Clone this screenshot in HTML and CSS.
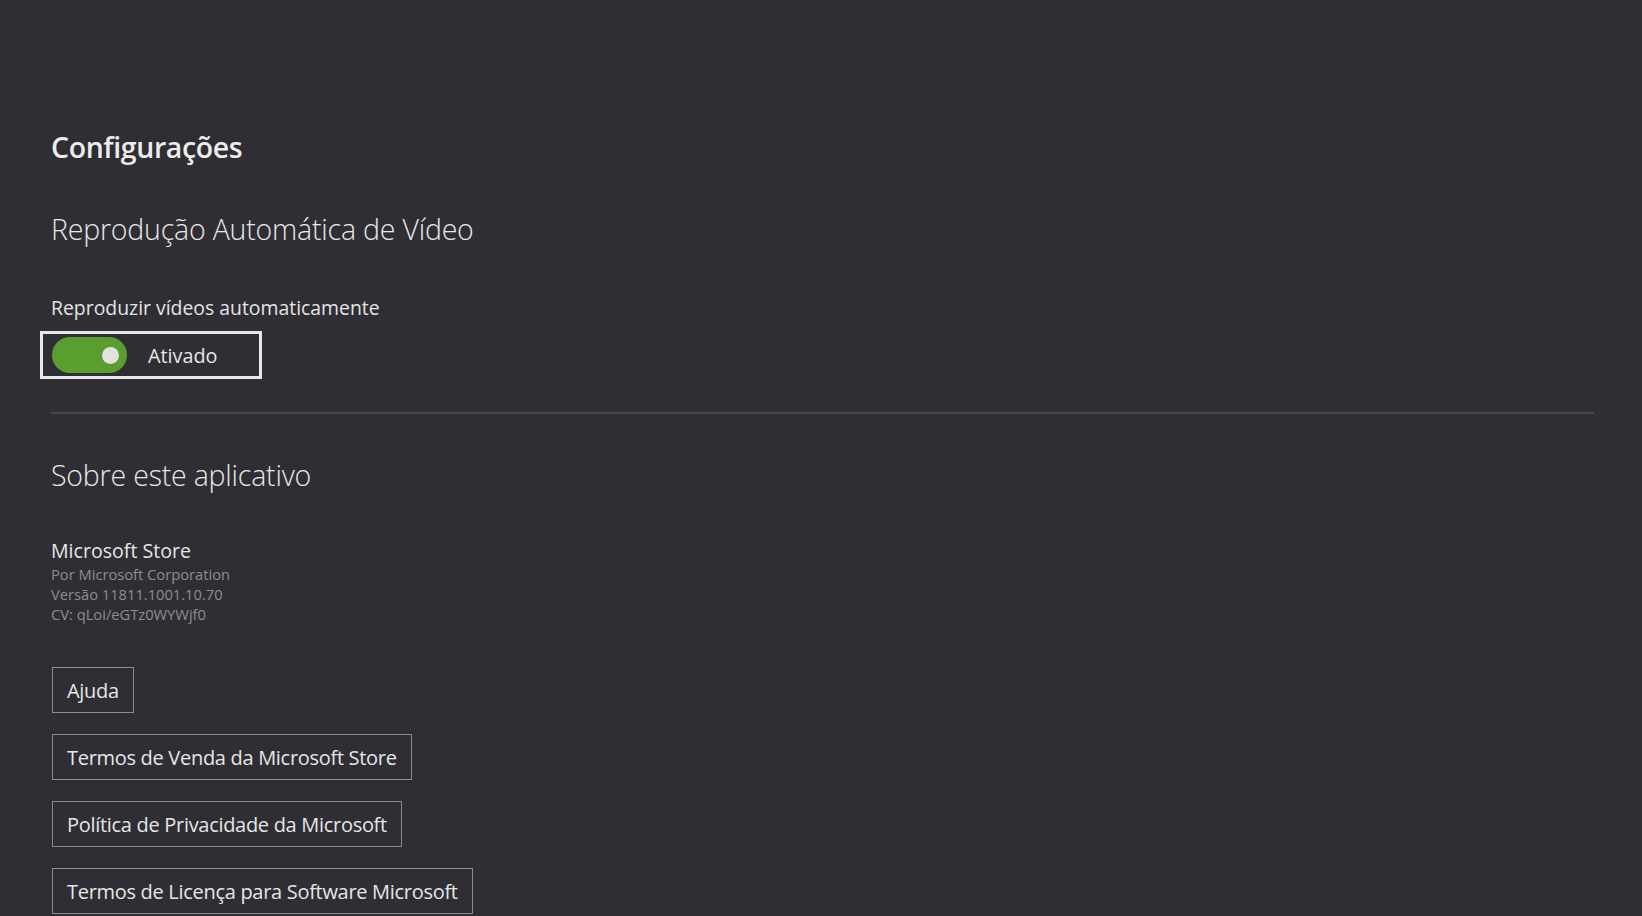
FILE: index.html
```html
<!DOCTYPE html>
<html lang="pt-BR">
<head>
<meta charset="utf-8">
<title>Configurações</title>
<link rel="stylesheet" href="styles.css">
</head>
<body>
<main class="page">
  <h1 class="page-title">Configurações</h1>

  <section class="section">
    <h2 class="section-title">Reprodução Automática de Vídeo</h2>
    <div class="setting-label">Reproduzir vídeos automaticamente</div>
    <div class="toggle-box">
      <span class="toggle"><span class="knob"></span></span>
      <span class="toggle-text">Ativado</span>
    </div>
  </section>

  <hr class="divider">

  <section class="section">
    <h2 class="section-title about-title">Sobre este aplicativo</h2>
    <div class="app-name">Microsoft Store</div>
    <div class="app-meta">
      <div>Por Microsoft Corporation</div>
      <div>Versão 11811.1001.10.70</div>
      <div>CV: qLoi/eGTz0WYWjf0</div>
    </div>
    <div class="buttons">
      <button class="link-btn">Ajuda</button>
      <button class="link-btn">Termos de Venda da Microsoft Store</button>
      <button class="link-btn">Política de Privacidade da Microsoft</button>
      <button class="link-btn">Termos de Licença para Software Microsoft</button>
    </div>
  </section>
</main>
</body>
</html>
```

FILE: styles.css
```css
html, body {
  margin: 0;
  padding: 0;
  background: #2f2e34;
  height: 100%;
  overflow: hidden;
}

body {
  font-family: "Open Sans", "Noto Sans", sans-serif;
  color: #e6e6e6;
}

.page {
  padding: 133px 48px 0 51px;
}

.page-title {
  margin: 0;
  font-size: 28.5px;
  line-height: 28px;
  font-weight: 600;
  letter-spacing: -0.4px;
  color: #ececec;
}

.section {
  display: flex;
  flex-direction: column;
  align-items: flex-start;
}

.section-title {
  margin: 54px 0 0;
  font-size: 28.5px;
  line-height: 28px;
  font-weight: 300;
  letter-spacing: -0.2px;
  color: #e8e8e8;
}

.setting-label {
  margin-top: 55px;
  font-size: 19.4px;
  line-height: 20px;
  color: #e4e4e4;
}

.toggle-box {
  margin: 13px 0 0 -11px;
  width: 207px;
  height: 42px;
  border: 3px solid #e8e8e8;
  display: flex;
  align-items: center;
  padding-left: 9px;
}

.toggle {
  width: 75px;
  height: 36px;
  border-radius: 18px;
  background: #5a9e2f;
  display: flex;
  align-items: center;
  justify-content: flex-end;
  padding-right: 8px;
  box-sizing: border-box;
}

.knob {
  width: 17px;
  height: 17px;
  border-radius: 50%;
  background: #e2e2e2;
}

.toggle-text {
  margin-left: 21px;
  font-size: 19.8px;
  color: #e8e8e8;
}

.divider {
  margin: 33px 0 0;
  border: 0;
  height: 2px;
  background: #48474d;
}

.about-title {
  margin-top: 47px;
}

.app-name {
  margin-top: 52px;
  font-size: 19.6px;
  line-height: 20px;
  color: #e6e6e6;
}

.app-meta {
  margin-top: 3px;
  font-size: 14.7px;
  line-height: 20px;
  color: #8e8d92;
}

.buttons {
  margin-top: 43px;
  display: flex;
  flex-direction: column;
  align-items: flex-start;
  gap: 21px;
}

.link-btn {
  margin-left: 1px;
  height: 46px;
  padding: 0 14px;
  background: transparent;
  border: 1px solid #8c8b90;
  font-family: "Open Sans", "Noto Sans", sans-serif;
  font-size: 20px;
  color: #e6e6e6;
  letter-spacing: -0.3px;
}
```
